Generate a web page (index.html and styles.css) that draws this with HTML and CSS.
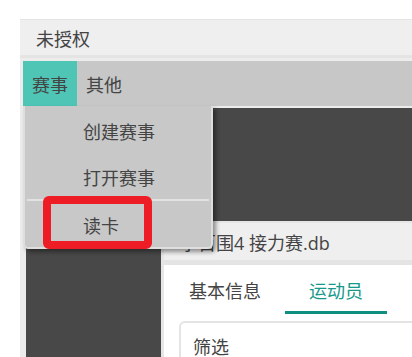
FILE: index.html
```html
<!DOCTYPE html>
<html lang="zh-CN">
<head>
  <meta charset="UTF-8" />
  <meta name="viewport" content="width=device-width, initial-scale=1.0">
  <title>未授权</title>
  <link rel="stylesheet" href="styles.css">
</head>
<body>
  <div class="window">
    <div class="titlebar">未授权</div>

    <div class="menubar">
      <span class="menu active">赛事</span>
      <span class="menu">其他</span>
    </div>

    <div class="workspace">
      <div class="child">
        <div class="child-title">字百围4 接力赛.db</div>
        <div class="child-body">
          <div class="tabs">
            <span class="tab">基本信息</span>
            <span class="tab active">运动员</span>
          </div>
          <div class="panel">筛选</div>
        </div>
      </div>
    </div>

    <div class="dropdown">
      <div class="item first">创建赛事</div>
      <div class="item">打开赛事</div>
      <div class="sep"></div>
      <div class="item last">读卡</div>
    </div>

    <div class="highlight"></div>
  </div>
</body>
</html>
```

FILE: styles.css
```css
body {
  margin: 0;
  background: #fff;
  color: #444;
  font-family: "Open Sans", "Noto Sans CJK SC", sans-serif;
  font-size: 18px;
  overflow: hidden;
}

.window {
  position: relative;
  margin: 19px 0 0 20px;
  height: 338px;
  background: #ececec;
  border-top: 1px solid #e4e4e4;
  display: flex;
  flex-direction: column;
  overflow: hidden;
}

.titlebar {
  flex-shrink: 0;
  height: 35px;
  padding-left: 16px;
  background: #efefef;
  border-bottom: 3px solid #e4e4e4;
  display: flex;
  align-items: center;
}

.menubar {
  flex-shrink: 0;
  margin: 3px 0 0 3px;
  height: 45px;
  background: #c7c7c7;
  display: flex;
}

.menu {
  padding: 0 9px;
  display: flex;
  align-items: center;
}

.menu.active {
  background: #4fc5b5;
}

.workspace {
  flex: 1;
  min-height: 0;
  margin: 2px 0 0 6px;
  padding: 113px 0 0 135px;
  background: #484848;
  display: flex;
}

.child {
  flex: 1;
  background: #e6e6e6;
  padding: 2px 0 0 3px;
  display: flex;
  flex-direction: column;
}

.child-title {
  flex-shrink: 0;
  height: 37px;
  padding-left: 16px;
  background: #efefef;
  border-bottom: 5px solid #e4e4e4;
  display: flex;
  align-items: center;
  white-space: nowrap;
}

.child-body {
  flex: 1;
  background: #fff;
  padding-left: 10px;
}

.tabs {
  display: flex;
  gap: 9px;
  height: 49px;
}

.tab {
  width: 102px;
  display: flex;
  justify-content: center;
  align-items: center;
  padding-top: 4px;
  border-bottom: 3px solid transparent;
  box-sizing: border-box;
}

.tab.active {
  color: #16998a;
  border-bottom-color: #0f8f7f;
}

.panel {
  margin: 7px 0 0 5px;
  height: 60px;
  border: 2px solid #e4e4e4;
  border-right: none;
  border-radius: 6px 0 0 0;
  padding: 10px 0 0 12px;
}

.dropdown {
  position: absolute;
  left: 3px;
  top: 86px;
  width: 186px;
  height: 139px;
  background: #c8c8c8;
  border: 2px solid #dedede;
  border-top: none;
  border-radius: 0 0 5px 5px;
  box-shadow: 3px 3px 4px rgba(0, 0, 0, 0.4);
  padding-top: 2px;
}

.item {
  height: 45px;
  padding-left: 58px;
  display: flex;
  align-items: center;
}

.item.first {
  height: 46px;
}

.item.last {
  height: 47px;
}

.sep {
  height: 2px;
  margin: 0 2px;
  background: #e2e2e2;
}

.highlight {
  position: absolute;
  left: 23px;
  top: 176px;
  width: 109px;
  height: 53px;
  box-sizing: border-box;
  border: 8px solid #ee1c25;
  border-radius: 6px;
}
```
